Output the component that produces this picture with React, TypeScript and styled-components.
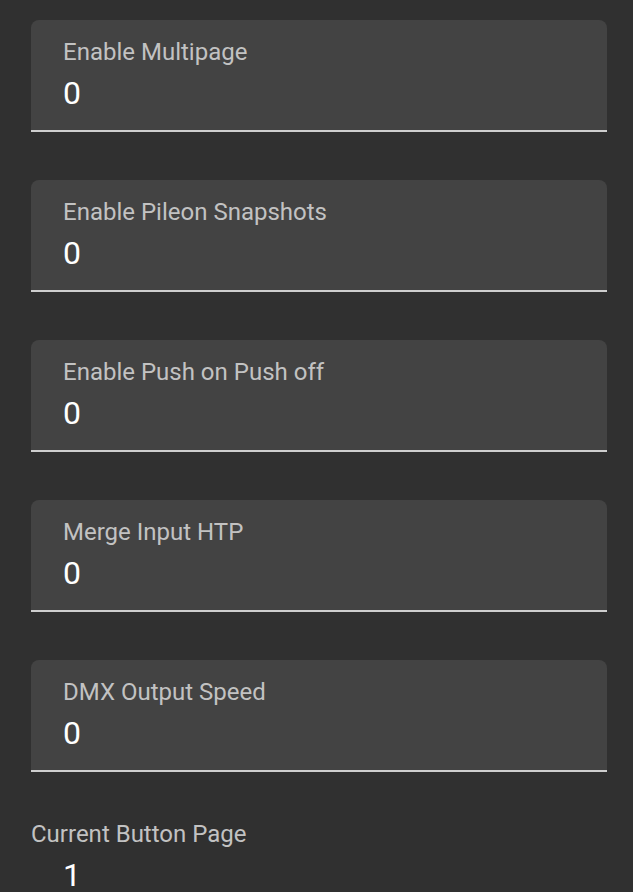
import React from "react";
import styled, { createGlobalStyle } from "styled-components";

const GlobalStyle = createGlobalStyle`
  html, body {
    margin: 0;
    padding: 0;
    background: #303030;
  }
  body {
    font-family: Roboto, "Liberation Sans", Arial, sans-serif;
  }
`;

const Page = styled.div`
  box-sizing: border-box;
  width: 633px;
  min-height: 892px;
  padding: 20px 26px 0 31px;
  display: flex;
  flex-direction: column;
  gap: 48px;
  background: #303030;
`;

const Field = styled.div<{ $filled?: boolean }>`
  display: flex;
  flex-direction: column;
  gap: 8px;
  width: 576px;
  box-sizing: border-box;
  ${(p) =>
    p.$filled
      ? `
    background: #434343;
    border-radius: 8px 8px 0 0;
    border-bottom: 2px solid #cfcfcf;
    padding: 18px 32px 18px 32px;
  `
      : `
    padding: 0;
  `}
`;

const Label = styled.div`
  font-size: 24px;
  line-height: 28px;
  color: #c2c2c2;
  white-space: nowrap;
`;

const Value = styled.div<{ $indent?: boolean }>`
  font-size: 32px;
  line-height: 38px;
  color: #ffffff;
  padding-left: ${(p) => (p.$indent ? "32px" : "0")};
`;

const fields = [
  { label: "Enable Multipage", value: "0" },
  { label: "Enable Pileon Snapshots", value: "0" },
  { label: "Enable Push on Push off", value: "0" },
  { label: "Merge Input HTP", value: "0" },
  { label: "DMX Output Speed", value: "0" },
];

export default function App() {
  return (
    <>
      <GlobalStyle />
      <Page>
        {fields.map((f) => (
          <Field key={f.label} $filled>
            <Label>{f.label}</Label>
            <Value>{f.value}</Value>
          </Field>
        ))}
        <Field>
          <Label>Current Button Page</Label>
          <Value $indent>1</Value>
        </Field>
      </Page>
    </>
  );
}
